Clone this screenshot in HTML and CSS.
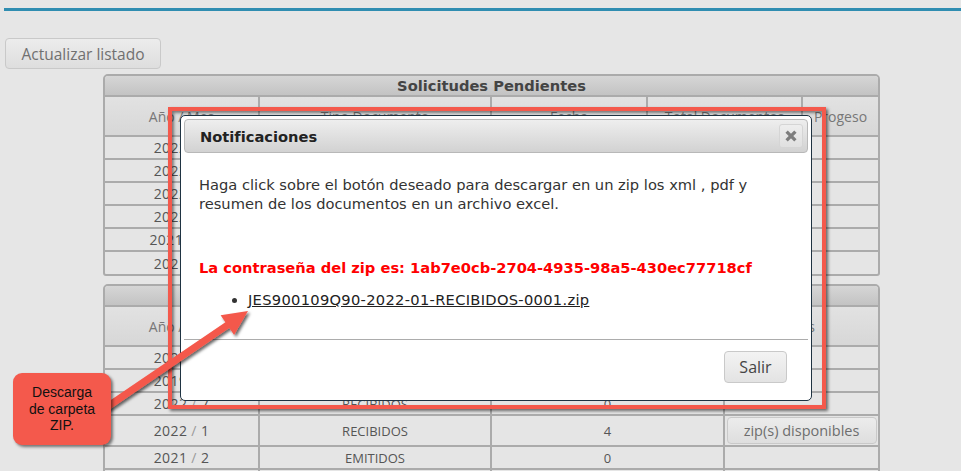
FILE: index.html
```html
<!DOCTYPE html>
<html lang="es">
<head>
<meta charset="utf-8">
<title>Solicitudes</title>
<link rel="stylesheet" href="styles.css">
</head>
<body>
<div class="topbar"></div>
<main class="page">
  <button class="btn btn-refresh" type="button">Actualizar listado</button>

  <section class="panel">
    <div class="panel-title">Solicitudes Pendientes</div>
    <table class="grid">
      <colgroup><col class="w154"><col class="w232"><col class="w156"><col class="w155"><col class="w76"></colgroup>
      <thead>
        <tr><th>Año / Mes</th><th>Tipo Documento</th><th>Fecha</th><th>Total Documentos</th><th>Progeso</th></tr>
      </thead>
      <tbody>
        <tr><td class="ym">2022 <span class="sep">/</span> 4</td><td>RECIBIDOS</td><td>2022-04-05</td><td>0</td><td></td></tr>
        <tr><td class="ym">2022 <span class="sep">/</span> 3</td><td>RECIBIDOS</td><td>2022-04-05</td><td>0</td><td></td></tr>
        <tr><td class="ym">2022 <span class="sep">/</span> 2</td><td>EMITIDOS</td><td>2022-04-05</td><td>0</td><td></td></tr>
        <tr><td class="ym">2022 <span class="sep">/</span> 1</td><td>EMITIDOS</td><td>2022-04-05</td><td>0</td><td></td></tr>
        <tr><td class="ym">2021 <span class="sep">/</span> 12</td><td>RECIBIDOS</td><td>2022-04-05</td><td>0</td><td></td></tr>
        <tr><td class="ym">2021 <span class="sep">/</span> 9</td><td>EMITIDOS</td><td>2022-04-05</td><td>0</td><td></td></tr>
      </tbody>
    </table>
  </section>

  <section class="panel">
    <div class="panel-title">Solicitudes Terminadas</div>
    <table class="grid">
      <colgroup><col class="w154"><col class="w232"><col class="w233"><col class="w154"></colgroup>
      <thead>
        <tr><th>Año / Mes</th><th>Tipo Documento</th><th>Total Documentos</th><th>Zips</th></tr>
      </thead>
      <tbody>
        <tr><td class="ym">2022 <span class="sep">/</span> 3</td><td>EMITIDOS</td><td>0</td><td></td></tr>
        <tr><td class="ym">2019 <span class="sep">/</span> 1</td><td>EMITIDOS</td><td>0</td><td></td></tr>
        <tr><td class="ym">2022 <span class="sep">/</span> 7</td><td>RECIBIDOS</td><td>0</td><td></td></tr>
        <tr class="tall"><td class="ym">2022 <span class="sep">/</span> 1</td><td>RECIBIDOS</td><td>4</td><td><button class="btn btn-zip" type="button">zip(s) disponibles</button></td></tr>
        <tr><td class="ym">2021 <span class="sep">/</span> 2</td><td>EMITIDOS</td><td>0</td><td></td></tr>
        <tr><td></td><td></td><td></td><td></td></tr>
      </tbody>
    </table>
  </section>
</main>

<div class="modal" role="dialog" aria-label="Notificaciones">
  <div class="modal-head">
    <span class="modal-title">Notificaciones</span>
    <button class="modal-close" type="button" aria-label="Cerrar">
      <svg width="12" height="12" viewBox="0 0 12 12"><path d="M1.6 1.6 L10.4 10.4 M10.4 1.6 L1.6 10.4" stroke="#7e7e7e" stroke-width="3.3"/></svg>
    </button>
  </div>
  <div class="modal-body">
    <p>Haga click sobre el botón deseado para descargar en un zip los xml , pdf y resumen de los documentos en un archivo excel.</p>
    <p class="pwd">La contraseña del zip es: 1ab7e0cb-2704-4935-98a5-430ec77718cf</p>
    <ul class="files">
      <li><a href="#">JES900109Q90-2022-01-RECIBIDOS-0001.zip</a></li>
    </ul>
  </div>
  <div class="modal-foot">
    <button class="btn btn-exit" type="button">Salir</button>
  </div>
</div>

<div class="annot-box"></div>

<svg class="arrow" width="961" height="471" viewBox="0 0 961 471">
  <defs>
    <filter id="sh" x="-20%" y="-20%" width="140%" height="140%">
      <feDropShadow dx="2" dy="2" stdDeviation="1.4" flood-color="#000" flood-opacity="0.6"/>
    </filter>
  </defs>
  <polygon filter="url(#sh)" fill="#f4594c" points="102,406.1 225.4,322.2 220.6,315.2 248,311 234.1,335 229.3,328 106,411.9"/>
</svg>

<div class="callout">Descarga<br>de carpeta<br>ZIP.</div>
</body>
</html>
```

FILE: styles.css
```css
* { box-sizing: border-box; }
html { overflow: hidden; }
body {
  margin: 0;
  width: 961px;
  height: 471px;
  position: relative;
  background: #e6e6e6;
  font-family: "Open Sans", "DejaVu Sans", sans-serif;
  color: #555;
}
.topbar {
  height: 3px;
  margin: 8px 0 0 4px;
  background: #2f8db1;
}
.page { padding: 27px 0 0 5px; }

.btn {
  font-family: "Open Sans", sans-serif;
  border: 1px solid #c9c9c9;
  border-radius: 4px;
  background: linear-gradient(#ececec, #dedede);
  color: #707070;
  padding: 0;
  cursor: pointer;
}
.btn-refresh {
  display: block;
  width: 156px;
  height: 31px;
  font-size: 15.5px;
}

.panel {
  width: 777px;
  margin: 5px 0 0 98px;
  border: 2px solid #ababab;
  border-radius: 5px 5px 3px 3px;
  overflow: hidden;
  background: #e5e5e5;
}
.panel + .panel { margin-top: 8px; }
.panel-title {
  height: 21px;
  border-bottom: 2px solid #ababab;
  background: linear-gradient(#d6d6d6, #c3c3c3);
  font-family: "DejaVu Sans", Verdana, sans-serif;
  font-weight: bold;
  font-size: 11pt;
  line-height: 19px;
  color: #444;
  text-align: center;
}

.grid {
  width: 100%;
  table-layout: fixed;
  border-collapse: collapse;
  border-style: hidden;
}
.w154 { width: 154px; }
.w155 { width: 155px; }
.w156 { width: 156px; }
.w232 { width: 232px; }
.w233 { width: 233px; }
.w76 { width: 76px; }
.grid th, .grid td {
  border: 2px solid #ababab;
  padding: 0;
  text-align: center;
  vertical-align: middle;
  white-space: nowrap;
  overflow: hidden;
}
.grid th {
  height: 39px;
  font-weight: normal;
  font-size: 14px;
  color: #777;
  background: linear-gradient(#e2e2e2, #d7d7d7);
}
.grid td {
  height: 23px;
  font-size: 13px;
  color: #555;
}
.grid td.ym { font-size: 14px; letter-spacing: 0.4px; }
.grid .sep { color: #9a9a9a; }
.grid tr.tall td { height: 31px; }
.btn-zip {
  width: 150px;
  height: 27px;
  font-size: 14.5px;
  color: #6e6e6e;
  display: block;
  margin: 0 auto;
}

.modal {
  position: absolute;
  left: 180px;
  top: 115px;
  width: 632px;
  height: 286px;
  border: 1px solid #1f3342;
  border-radius: 5px;
  background: #fff;
  padding: 3px;
  display: flex;
  flex-direction: column;
  font-family: "DejaVu Sans", Verdana, sans-serif;
  color: #333;
  z-index: 2;
}
.modal-head {
  flex: none;
  height: 34px;
  display: flex;
  align-items: center;
  justify-content: space-between;
  padding: 0 4px 0 15px;
  border: 1px solid #b8b8b8;
  border-radius: 4px;
  background: linear-gradient(#eeeeee, #d2d2d2);
}
.modal-title {
  font-weight: bold;
  font-size: 11pt;
  color: #222;
}
.modal-close {
  width: 24px;
  height: 24px;
  padding: 0;
  border: 1px solid #d5d5d5;
  border-radius: 3px;
  background: linear-gradient(#eeeeee, #e0e0e0);
  display: flex;
  align-items: center;
  justify-content: center;
}
.modal-body {
  flex: 1;
  padding: 22px 15px 0 15px;
  font-size: 11pt;
  line-height: 19px;
}
.modal-body p { margin: 0; }
.modal-body .pwd {
  margin-top: 45px;
  color: #ff0000;
  font-weight: bold;
}
.files {
  margin: 13px 0 0;
  padding-left: 49px;
}
.files a {
  color: #222;
  text-decoration: underline;
  letter-spacing: 0.3px;
}
.modal-foot {
  flex: none;
  border-top: 1px solid #acacac;
  padding: 11px 21px 14px;
  display: flex;
  justify-content: flex-end;
}
.btn-exit {
  width: 63px;
  height: 32px;
  font-size: 16px;
  color: #454545;
  background: linear-gradient(#f3f3f3, #e3e3e3);
}

.annot-box {
  position: absolute;
  left: 168px;
  top: 107px;
  width: 658px;
  height: 302px;
  border: 4.5px solid #f4594c;
  box-shadow: 2px 2px 3px rgba(0,0,0,0.55), inset 2px 2px 3px rgba(0,0,0,0.45);
  z-index: 3;
  pointer-events: none;
}
.arrow {
  position: absolute;
  left: 0;
  top: 0;
  z-index: 4;
  pointer-events: none;
}
.callout {
  position: absolute;
  left: 13px;
  top: 373px;
  width: 98px;
  height: 72px;
  background: #f4594c;
  border-radius: 9px;
  box-shadow: 2px 2px 3px rgba(0,0,0,0.5);
  display: flex;
  align-items: center;
  justify-content: center;
  text-align: center;
  font-family: "Liberation Sans", Arial, sans-serif;
  font-size: 14px;
  line-height: 16.5px;
  color: #111;
  z-index: 5;
}
```
